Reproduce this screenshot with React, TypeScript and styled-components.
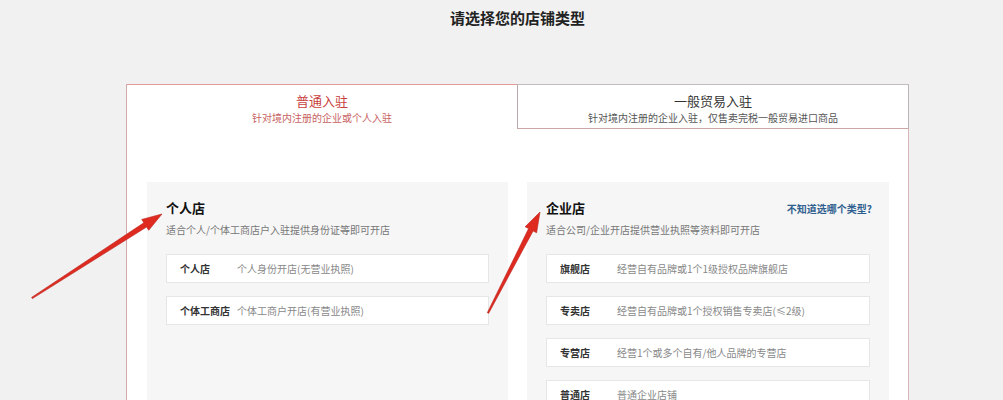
import * as React from "react";
import styled, { createGlobalStyle } from "styled-components";

const GlobalStyle = createGlobalStyle`
  html, body {
    margin: 0;
    padding: 0;
    background: #f1f1f1;
    font-family: "Noto Sans CJK SC", "Noto Sans", "Liberation Sans", sans-serif;
    color: #333;
  }
`;

const Page = styled.div`
  position: relative;
  width: 1003px;
  height: 400px;
  overflow: hidden;
`;

const Wrap = styled.div`
  width: 783px;
  margin-left: 126px;
`;

const Heading = styled.h1`
  margin: 0;
  height: 84px;
  padding-top: 8px;
  box-sizing: border-box;
  text-align: center;
  font-size: 15px;
  line-height: 20px;
  font-weight: bold;
  color: #222;
`;

const Panel = styled.div`
  background: #fff;
  border-left: 1px solid #d2a9a9;
  border-right: 1px solid #d6b8b8;
  height: 340px;
`;

const Tabs = styled.div`
  display: flex;
  height: 45px;
`;

interface ITabProps {
  active: boolean;
}

const Tab = styled.div<ITabProps>`
  flex: 1;
  box-sizing: border-box;
  text-align: center;
  padding-top: 7px;
  background: #fff;
  ${({ active }) =>
    active
      ? `
    border-top: 1px solid #e39a9a;
  `
      : `
    border-top: 1px solid #c4bcbc;
    border-left: 1px solid #b9a9a9;
    border-bottom: 1px solid #c9a7a7;
    margin-right: -1px;
    border-right: 1px solid #bdb5b5;
  `}
`;

const TabTitle = styled.div<ITabProps>`
  font-size: 13px;
  line-height: 18px;
  color: ${({ active }) => (active ? "#c8403d" : "#333")};
`;

const TabSub = styled.div<ITabProps>`
  font-size: 10px;
  line-height: 14px;
  margin-top: 1px;
  color: ${({ active }) => (active ? "#c86262" : "#555")};
`;

const Body = styled.div`
  display: grid;
  grid-template-columns: 361px 362px;
  gap: 19px;
  padding: 53px 19px 0 20px;
`;

const Card = styled.div`
  background: #f6f6f6;
  padding: 17px 19px 40px 19px;
  height: 300px;
`;

const CardHead = styled.div`
  display: flex;
  justify-content: space-between;
  align-items: center;
`;

const CardTitle = styled.div`
  font-size: 13px;
  line-height: 18px;
  font-weight: bold;
  color: #111;
`;

const HelpLink = styled.a`
  font-size: 10px;
  font-weight: bold;
  color: #2f5f8f;
  text-decoration: none;
  margin-right: -2px;
`;

const CardSub = styled.div`
  font-size: 10px;
  line-height: 14px;
  color: #777;
  margin-top: 6px;
  margin-bottom: 17px;
`;

const Rows = styled.div`
  display: flex;
  flex-direction: column;
  gap: 13px;
`;

const Row = styled.div`
  display: flex;
  align-items: center;
  height: 29px;
  box-sizing: border-box;
  background: #fff;
  border: 1px solid #e6e6e6;
  padding-left: 13px;
  font-size: 10px;
`;

const RowLabel = styled.span`
  width: 57px;
  flex-shrink: 0;
  font-weight: bold;
  color: #333;
`;

const RowDesc = styled.span`
  color: #888;
`;

const Overlay = styled.svg`
  position: absolute;
  left: 0;
  top: 0;
  pointer-events: none;
`;

type Pt = [number, number];

const arrowPoints = (tail: Pt, tip: Pt, headLen: number, headW: number, neckW: number, tailW: number) => {
  const dx = tip[0] - tail[0];
  const dy = tip[1] - tail[1];
  const len = Math.hypot(dx, dy);
  const ux = dx / len;
  const uy = dy / len;
  const nx = -uy;
  const ny = ux;
  const bx = tip[0] - ux * headLen;
  const by = tip[1] - uy * headLen;
  const p = (x: number, y: number) => `${x.toFixed(1)},${y.toFixed(1)}`;
  return [
    p(tail[0] + (nx * tailW) / 2, tail[1] + (ny * tailW) / 2),
    p(bx + (nx * neckW) / 2, by + (ny * neckW) / 2),
    p(bx + (nx * headW) / 2, by + (ny * headW) / 2),
    p(tip[0], tip[1]),
    p(bx - (nx * headW) / 2, by - (ny * headW) / 2),
    p(bx - (nx * neckW) / 2, by - (ny * neckW) / 2),
    p(tail[0] - (nx * tailW) / 2, tail[1] - (ny * tailW) / 2),
  ].join(" ");
};

const Arrow = ({ tail, tip }: { tail: Pt; tip: Pt }) => (
  <polygon
    points={arrowPoints(tail, tip, 20, 13, 5, 1.5)}
    fill="#df2a20"
    stroke="#b8231c"
    strokeWidth={0.6}
    strokeLinejoin="round"
  />
);

const personal = [
  { label: "个人店", desc: "个人身份开店(无营业执照)" },
  { label: "个体工商店", desc: "个体工商户开店(有营业执照)" },
];

const company = [
  { label: "旗舰店", desc: "经营自有品牌或1个1级授权品牌旗舰店" },
  { label: "专卖店", desc: "经营自有品牌或1个授权销售专卖店(≤2级)" },
  { label: "专营店", desc: "经营1个或多个自有/他人品牌的专营店" },
  { label: "普通店", desc: "普通企业店铺" },
];

export default function App() {
  return (
    <Page>
      <GlobalStyle />
      <Wrap>
        <Heading>请选择您的店铺类型</Heading>
        <Panel>
          <Tabs>
            <Tab active>
              <TabTitle active>普通入驻</TabTitle>
              <TabSub active>针对境内注册的企业或个人入驻</TabSub>
            </Tab>
            <Tab active={false}>
              <TabTitle active={false}>一般贸易入驻</TabTitle>
              <TabSub active={false}>针对境内注册的企业入驻，仅售卖完税一般贸易进口商品</TabSub>
            </Tab>
          </Tabs>
          <Body>
            <Card>
              <CardHead>
                <CardTitle>个人店</CardTitle>
              </CardHead>
              <CardSub>适合个人/个体工商店户入驻提供身份证等即可开店</CardSub>
              <Rows>
                {personal.map((r) => (
                  <Row key={r.label}>
                    <RowLabel>{r.label}</RowLabel>
                    <RowDesc>{r.desc}</RowDesc>
                  </Row>
                ))}
              </Rows>
            </Card>
            <Card>
              <CardHead>
                <CardTitle>企业店</CardTitle>
                <HelpLink href="#">不知道选哪个类型?</HelpLink>
              </CardHead>
              <CardSub>适合公司/企业开店提供营业执照等资料即可开店</CardSub>
              <Rows>
                {company.map((r) => (
                  <Row key={r.label}>
                    <RowLabel>{r.label}</RowLabel>
                    <RowDesc>{r.desc}</RowDesc>
                  </Row>
                ))}
              </Rows>
            </Card>
          </Body>
        </Panel>
      </Wrap>
      <Overlay width={1003} height={400} viewBox="0 0 1003 400">
        <Arrow tail={[32, 298]} tip={[162, 214]} />
        <Arrow tail={[488, 313]} tip={[540, 212]} />
      </Overlay>
    </Page>
  );
}
